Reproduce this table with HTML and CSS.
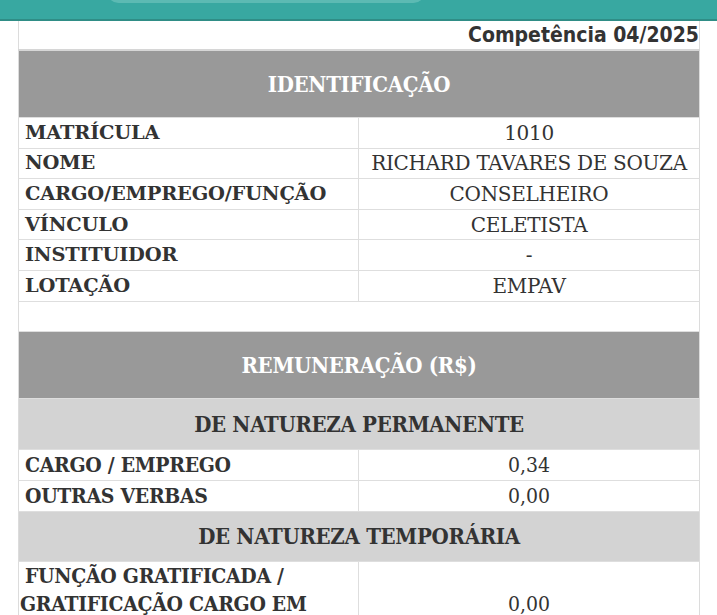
FILE: index.html
```html
<!DOCTYPE html>
<html lang="pt">
<head>
<meta charset="utf-8">
<link rel="stylesheet" href="styles.css">
</head>
<body>
<header class="topbar">
  <div class="search"></div>
</header>
<main class="page">
  <table class="sheet">
    <colgroup><col class="c1"><col class="c2"></colgroup>
    <tr><td colspan="2" class="comp">Competência 04/2025</td></tr>
    <tr><th colspan="2" class="head">IDENTIFICAÇÃO</th></tr>
    <tr><td class="lbl">MATRÍCULA</td><td class="val">1010</td></tr>
    <tr><td class="lbl">NOME</td><td class="val">RICHARD TAVARES DE SOUZA</td></tr>
    <tr><td class="lbl">CARGO/EMPREGO/FUNÇÃO</td><td class="val">CONSELHEIRO</td></tr>
    <tr><td class="lbl">VÍNCULO</td><td class="val">CELETISTA</td></tr>
    <tr><td class="lbl">INSTITUIDOR</td><td class="val">-</td></tr>
    <tr><td class="lbl">LOTAÇÃO</td><td class="val">EMPAV</td></tr>
    <tr><td colspan="2" class="blank"></td></tr>
    <tr><th colspan="2" class="head head2">REMUNERAÇÃO (R$)</th></tr>
    <tr><th colspan="2" class="sub">DE NATUREZA PERMANENTE</th></tr>
    <tr><td class="lbl2">CARGO / EMPREGO</td><td class="val2">0,34</td></tr>
    <tr><td class="lbl2">OUTRAS VERBAS</td><td class="val2">0,00</td></tr>
    <tr><th colspan="2" class="sub sub2">DE NATUREZA TEMPORÁRIA</th></tr>
    <tr><td class="lbl2 multi">FUNÇÃO GRATIFICADA /<br>GRATIFICAÇÃO CARGO EM<br>COMISSÃO</td><td class="val2 multi-val">0,00</td></tr>
  </table>
</main>
</body>
</html>
```

FILE: styles.css
```css
html, body {
  margin: 0;
  padding: 0;
  background: #ffffff;
  overflow: hidden;
}
body {
  font-family: "DejaVu Serif", "Liberation Serif", serif;
  color: #333333;
}
.topbar {
  height: 19px;
  background: #38a8a1;
  border-bottom: 2px solid #2f8d86;
  position: relative;
  overflow: hidden;
}
.search {
  position: absolute;
  left: 107px;
  top: -20px;
  width: 318px;
  height: 23px;
  border-radius: 12px;
  background: #5cbab3;
}
.page {
  padding-left: 18px;
}
.sheet {
  width: 681px;
  border-collapse: collapse;
  table-layout: fixed;
  border-left: 1px solid #dcdcdc;
  border-right: 1px solid #dcdcdc;
}
.c1 { width: 340px; }
.c2 { width: 341px; }
.sheet td, .sheet th {
  padding: 0;
  border-bottom: 1px solid #dedede;
}
.comp {
  height: 28px;
  text-align: right;
  font-family: "DejaVu Sans Condensed", "DejaVu Sans", sans-serif;
  font-weight: bold;
  font-size: 21px;
  color: #333;
  vertical-align: middle;
  border-bottom: 2px solid #d6d6d6 !important;
}
.head {
  height: 66px;
  background: #999999;
  color: #ffffff;
  font-family: "DejaVu Serif Condensed", "DejaVu Serif", serif;
  font-weight: bold;
  font-size: 22px;
  text-align: center;
  vertical-align: middle;
  letter-spacing: -0.3px;
}
.head2 { height: 66px; }
.lbl {
  height: 29.6px;
  line-height: 28px;
  padding-left: 6px !important;
  font-weight: bold;
  font-size: 19.4px;
  color: #333;
  border-right: 1px solid #dedede;
  white-space: nowrap;
  letter-spacing: -0.2px;
}
.val {
  text-align: center;
  line-height: 28px;
  font-size: 20px;
  color: #333;
  white-space: nowrap;
  letter-spacing: -0.3px;
}
.blank { height: 29px; }
.sub {
  height: 50px;
  background: #d3d3d3;
  color: #333;
  font-family: "DejaVu Serif Condensed", "DejaVu Serif", serif;
  font-weight: bold;
  font-size: 22px;
  text-align: center;
  vertical-align: middle;
  letter-spacing: -0.3px;
}
.sub2 { height: 49px; }
.lbl2 {
  height: 30px;
  line-height: 28px;
  padding-left: 6px !important;
  font-family: "DejaVu Serif Condensed", "DejaVu Serif", serif;
  font-weight: bold;
  font-size: 21px;
  color: #333;
  border-right: 1px solid #dedede;
  white-space: nowrap;
  letter-spacing: -0.3px;
}
.val2 {
  text-align: center;
  line-height: 28px;
  font-family: "DejaVu Serif Condensed", "DejaVu Serif", serif;
  font-size: 21px;
  color: #333;
}
.multi {
  line-height: 28px;
  padding-top: 0 !important;
  padding-left: 1px !important;
  text-indent: 5px;
  vertical-align: top;
}
.multi-val {
  vertical-align: top;
  padding-top: 28px !important;
}
```
